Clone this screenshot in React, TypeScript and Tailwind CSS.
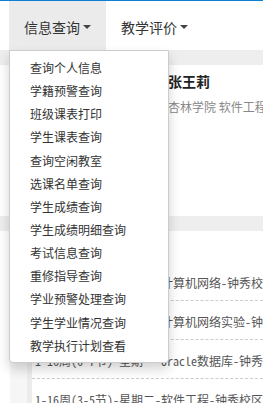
import React from "react";

const Caret = () => (
  <span className="inline-block ml-[3px] w-0 h-0 border-t-[4px] border-t-[#444] border-x-[4px] border-x-transparent align-middle" />
);

const menuItems = [
  "查询个人信息",
  "学籍预警查询",
  "班级课表打印",
  "学生课表查询",
  "查询空闲教室",
  "选课名单查询",
  "学生成绩查询",
  "学生成绩明细查询",
  "考试信息查询",
  "重修指导查询",
  "学业预警处理查询",
  "学生学业情况查询",
  "教学执行计划查看",
];

const rows = [
  "1-16周(1-2节)-星期一-计算机网络-钟秀校区",
  "1-16周(3-4节)-星期一-计算机网络实验-钟秀校区",
  "1-16周(6-7节)-星期一-Oracle数据库-钟秀校区",
  "1-16周(3-5节)-星期二-软件工程-钟秀校区",
];

export default function App() {
  return (
    <div className="relative w-[263px] h-[403px] overflow-hidden bg-white font-['Noto_Sans_CJK_SC',sans-serif] text-[#333]">
      {/* navbar */}
      <div className="border-t border-[#0b80d6] bg-white h-[50px] flex relative z-20">
        <div className="relative ml-[9px]">
          <div className="h-[49px] px-[15px] bg-[#ebebeb] flex items-center text-[14px] leading-[20px] pt-[3px] text-[#333] whitespace-nowrap">
            信息查询
            <Caret />
          </div>
          <ul className="absolute left-0 top-full w-[160px] bg-white border border-[#ccc] rounded-b-[4px] py-[5px] shadow-[0_6px_12px_rgba(0,0,0,0.18)]">
            {menuItems.map((m) => (
              <li
                key={m}
                className="px-[20px] py-[3px] text-[12px] leading-[17.14px] text-[#333] whitespace-nowrap"
              >
                {m}
              </li>
            ))}
          </ul>
        </div>
        <div className="h-[49px] px-[15px] flex items-center text-[14px] leading-[20px] pt-[3px] text-[#333] whitespace-nowrap">
          教学评价
          <Caret />
        </div>
      </div>

      <div className="h-[15px] bg-[#eeeeee]" />

      {/* student card */}
      <div className="h-[151px] bg-white flex pl-[10px] pt-[6px]">
        <div className="w-[158px] shrink-0">
          <div className="w-[70px] h-[90px] bg-[#e5e5e5] ml-[10px]" />
        </div>
        <div className="flex flex-col whitespace-nowrap">
          <div className="text-[14px] leading-[20px] font-bold text-[#222]">张王莉</div>
          <div className="mt-[7px] text-[12px] leading-[18px] text-[#888]">杏林学院 软件工程 2015级</div>
        </div>
      </div>

      <div className="h-[15px] bg-[#eeeeee]" />

      {/* schedule */}
      <div className="bg-white">
        <div className="h-[31px] pl-[15px] flex items-center text-[13px] text-[#333]">本学期课表</div>
        <div className="flex">
          <div className="ml-[10px] w-[17px] shrink-0 bg-[#f6f6f6]" />
          <div className="w-[5px] shrink-0 bg-[#ececec]" />
          <div className="flex-1 min-w-0">
            {rows.map((r) => (
              <div
                key={r}
                className="pl-[3px] pt-[12px] pb-[8px] border-b border-dashed border-[#cccccc] text-[12px] leading-[18px] text-[#555] whitespace-nowrap font-['Noto_Sans_Mono_CJK_SC','Noto_Sans_CJK_SC',monospace]"
              >
                {r}
              </div>
            ))}
          </div>
        </div>
      </div>
    </div>
  );
}
